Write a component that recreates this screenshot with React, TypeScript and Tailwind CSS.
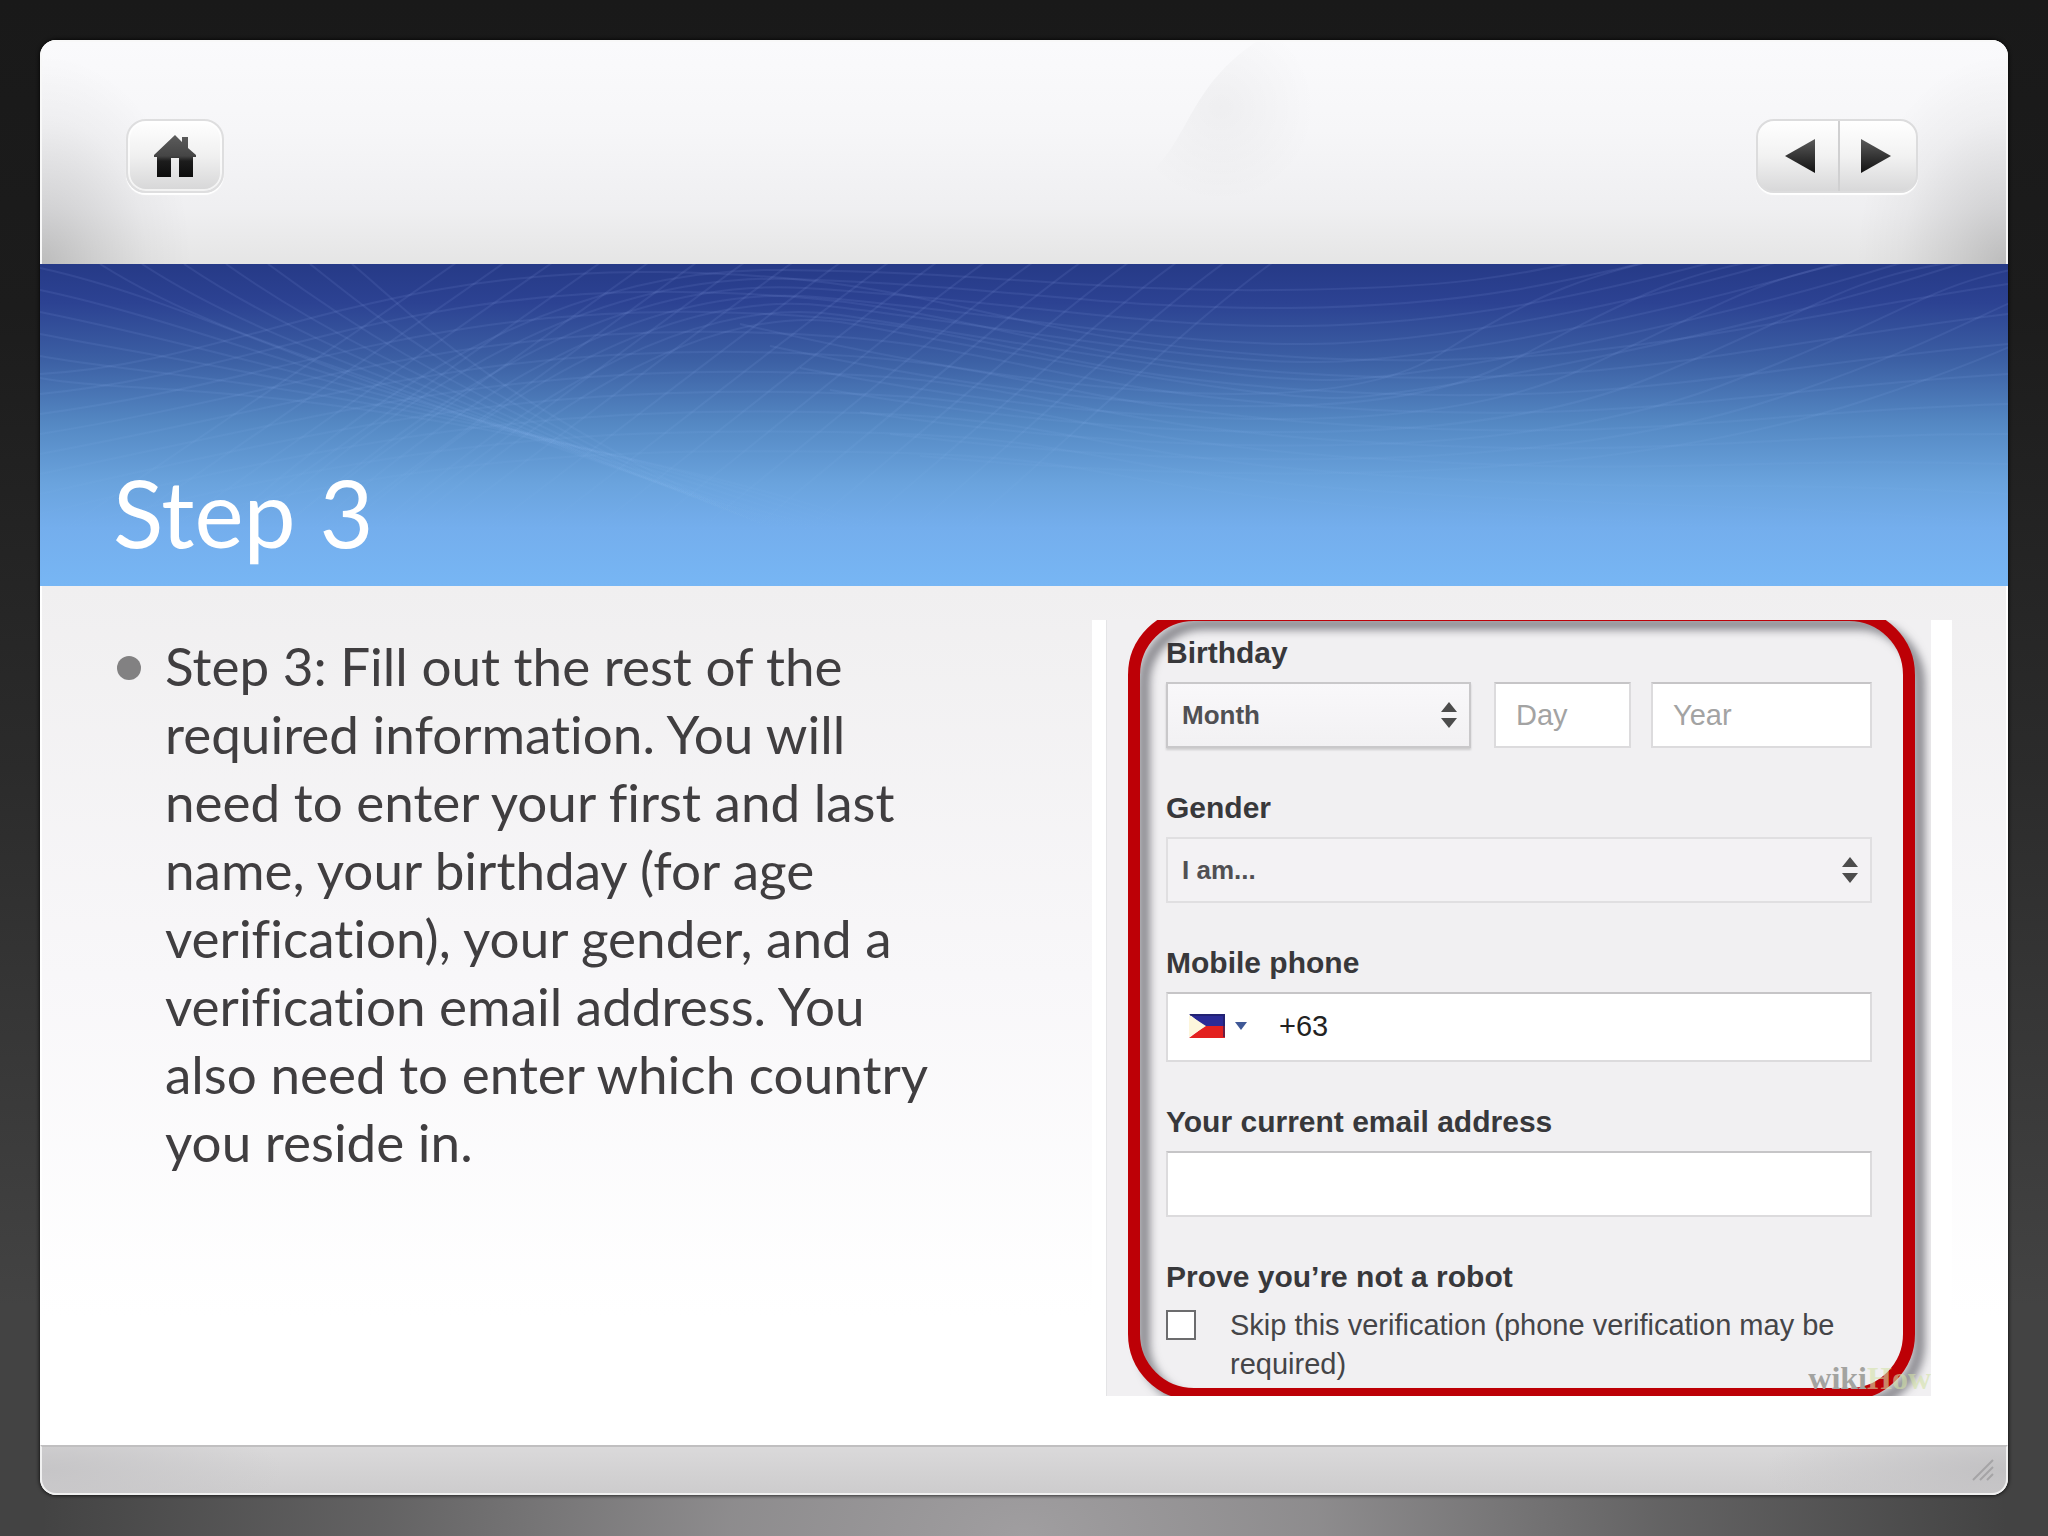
import React from "react";

const range = (n: number) => Array.from({ length: n }, (_, i) => i);

// Faint lattice of curves drawn over the blue title band.
function BannerLines() {
  const fan = range(7).map(
    (i) => `M${60 + i * 42} 0 C${170 + i * 34} ${70 - i * 3} ${300 + i * 22} ${100 + i * 3} ${540 + i * 20} ${190 + i * 7} S${900 + i * 10} 280 1100 300`
  );
  const left = range(6).map(
    (i) => `M0 ${i * 22 + 4} C${120 - i * 6} ${30 + i * 20} ${240 - i * 8} ${90 + i * 5} ${420 + i * 20} ${150 + i * 6} S${760 + i * 20} 280 960 300`
  );
  const hills = range(10).map(
    (i) =>
      `M0 ${110 + i * 20} C${190 + i * 20} ${100 + i * 10} ${330 + i * 24} ${4 + i * 20} ${620 + i * 22} ${8 + i * 20} S${940 + i * 12} ${72 + i * 17} ${1240 + i * 14} ${92 + i * 17} S1700 ${60 + i * 22} 1968 ${20 + i * 30}`
  );
  const troughs = range(7).map(
    (i) =>
      `M${120 + i * 30} 320 C${330 + i * 20} ${120 + i * 12} ${520 + i * 20} ${4 + i * 4} ${740 + i * 12} ${6 + i * 9} S${1040 + i * 30} ${28 + i * 18} ${1240 + i * 10} ${26 + i * 18} S${1480 + i * 40} ${10 + i * 10} ${1620 + i * 60} -20`
  );
  const right = range(7).map(
    (i) => `M${700 + i * 30} ${60 + i * 22} C${1000 + i * 20} ${130 + i * 14} ${1290 + i * 40} ${160 + i * 12} ${1400 + i * 70} ${90 + i * 8} S${1560 + i * 80} 10 ${1640 + i * 110} -10`
  );
  const diagonals = range(18).map(
    (i) => `M${-60 + i * 54} 322 C${120 + i * 52} 200 ${330 + i * 48} 60 ${420 + i * 48} -4`
  );
  return (
    <svg
      className="absolute inset-0 h-full w-full"
      viewBox="0 0 1968 322"
      preserveAspectRatio="none"
      fill="none"
      aria-hidden="true"
    >
      <defs>
        <linearGradient id="lineFade" gradientUnits="userSpaceOnUse" x1="0" y1="0" x2="0" y2="270">
          <stop offset="0" stopColor="#8fa0e6" stopOpacity="0.12" />
          <stop offset="0.5" stopColor="#8fb6f4" stopOpacity="0.1" />
          <stop offset="1" stopColor="#9fd0ff" stopOpacity="0" />
        </linearGradient>
      </defs>
      {[...fan, ...left, ...hills, ...troughs, ...right, ...diagonals].map((d) => (
        <path key={d} d={d} stroke="url(#lineFade)" strokeWidth="2" />
      ))}
    </svg>
  );
}

function HomeIcon() {
  return (
    <svg className="h-11 w-11" viewBox="0 0 44 44" aria-hidden="true">
      <defs>
        <linearGradient id="homeFill" x1="0" y1="0" x2="0" y2="1">
          <stop offset="0" stopColor="#5c5c5c" />
          <stop offset="0.5" stopColor="#454545" />
          <stop offset="0.62" stopColor="#1c1c1c" />
          <stop offset="1" stopColor="#0c0c0c" />
        </linearGradient>
      </defs>
      <path
        fill="url(#homeFill)"
        d="M22 1 L29 8 V3 H35 V14 L43 21 V23 H40 V43 H26 V24 H18 V43 H4 V23 H1 V21 Z"
      />
    </svg>
  );
}

function Triangle({ dir }: { dir: "left" | "right" }) {
  return (
    <svg className="h-9 w-8" viewBox="0 0 32 36" aria-hidden="true">
      <defs>
        <linearGradient id="triFill" x1="0" y1="0" x2="0" y2="1">
          <stop offset="0" stopColor="#5a5a5a" />
          <stop offset="1" stopColor="#111" />
        </linearGradient>
      </defs>
      <path fill="url(#triFill)" d={dir === "left" ? "M1 18 L31 1 V35 Z" : "M31 18 L1 1 V35 Z"} />
    </svg>
  );
}

function UpDown() {
  return (
    <svg className="pointer-events-none absolute right-3.5 top-1/2 h-7 w-4 -translate-y-1/2" viewBox="0 0 16 28" aria-hidden="true">
      <path fill="#4c4c4c" d="M8 1 L16 11 H0 Z M8 27 L16 17 H0 Z" />
    </svg>
  );
}

function Flag() {
  return (
    <svg className="h-6 w-9" viewBox="0 0 36 24" aria-hidden="true">
      <path fill="#2b2b96" d="M0 0 H36 V13 H16 Z" />
      <path fill="#e3211f" d="M0 24 H36 V12 H16 Z" />
      <path fill="#fdf6dc" d="M0 1 L17 12 L0 23 Z" />
      <path fill="none" stroke="#1c1c5c" strokeOpacity="0.6" strokeWidth="2" d="M1 1 H35 V23" />
    </svg>
  );
}

const label = "block text-[30px] leading-9 font-bold text-[#38383b]";
const field =
  "h-[66px] w-full min-w-0 border-2 border-[#dcdbdd] border-t-[#c6c5c7] bg-white px-5 text-[29px] text-[#333] outline-none placeholder:text-[#a3a3a3]";
const select =
  "h-[66px] w-full appearance-none border-2 px-3.5 text-[26px] font-bold text-[#505053] outline-none";

function SignupForm() {
  return (
    <div className="flex bg-white pl-3.5 pr-[21px] font-['Liberation_Sans',Arial,sans-serif]">
      <form className="relative flex-1 overflow-hidden border-l border-[#e4e4e6] bg-[#f1f0f2] pt-[15px] pr-[59px] pb-3 pl-[59px]">
        <div className="pointer-events-none absolute -top-[11px] right-4 -bottom-1 left-[21px] rounded-[66px] border-[12px] border-[#bd0006] drop-shadow-[10px_9px_4px_rgba(40,40,50,0.5)]" />
        <div className="flex flex-col gap-[42px]">
          <fieldset>
            <legend className={label}>Birthday</legend>
            <div className="mt-[11px] flex">
              <div className="relative mr-[23px] w-[305px] shrink-0">
                <select
                  aria-label="Month"
                  className={`${select} border-[#c9c8ca] bg-linear-to-b from-[#f9f8fa] to-[#f2f1f3] shadow-[0_2px_2px_rgba(0,0,0,0.15)]`}
                >
                  <option>Month</option>
                </select>
                <UpDown />
              </div>
              <div className="mr-5 w-[137px] shrink-0">
                <input aria-label="Day" placeholder="Day" className={field} />
              </div>
              <div className="flex-1">
                <input aria-label="Year" placeholder="Year" className={field} />
              </div>
            </div>
          </fieldset>
          <div>
            <label htmlFor="gender" className={label}>
              Gender
            </label>
            <div className="relative mt-[11px]">
              <select id="gender" className={`${select} border-[#e0dfe1] bg-[#f3f2f4]`}>
                <option>I am...</option>
              </select>
              <UpDown />
            </div>
          </div>
          <div>
            <label htmlFor="phone" className={label}>
              Mobile phone
            </label>
            <div className="mt-[11px] flex h-[70px] items-center border-2 border-[#dcdbdd] border-t-[#c6c5c7] bg-white pb-0.5 pl-[21px]">
              <button type="button" aria-label="Country code" className="flex items-center gap-2.5">
                <Flag />
                <svg className="h-2 w-3" viewBox="0 0 12 8" aria-hidden="true">
                  <path fill="#3f5896" d="M0 0 H12 L6 8 Z" />
                </svg>
              </button>
              <input
                id="phone"
                defaultValue="+63"
                className="ml-8 h-full min-w-0 flex-1 bg-transparent text-[29px] text-[#222] outline-none"
              />
            </div>
          </div>
          <div>
            <label htmlFor="email" className={label}>
              Your current email address
            </label>
            <input id="email" className={`${field} mt-[11px] block`} />
          </div>
          <fieldset>
            <legend className={label}>Prove you’re not a robot</legend>
            <div className="mt-[11px] flex items-start">
              <input
                id="skip"
                type="checkbox"
                className="mt-1 h-[30px] w-[30px] shrink-0 appearance-none border-2 border-[#6c6c6e] bg-white"
              />
              <label htmlFor="skip" className="ml-[34px] text-[29px] leading-[39px] text-[#454548]">
                Skip this verification (phone verification may be required)
              </label>
            </div>
          </fieldset>
        </div>
        <div className="absolute right-0 bottom-0.5 font-['Liberation_Serif',serif] text-[32px] leading-8 font-bold">
          <span className="text-[#a3a3a0]">wiki</span>
          <span className="text-[#d3e2a8]/60">How</span>
        </div>
      </form>
    </div>
  );
}

export default function App() {
  return (
    <div className="flex min-h-screen flex-col bg-[radial-gradient(ellipse_48%_40%_at_50%_100%,#a09ea0_0%,rgba(160,158,160,0.8)_30%,rgba(160,158,160,0.35)_65%,transparent_100%),linear-gradient(to_bottom,#191919_0%,#1c1c1c_20%,#2b2b2b_50%,#434343_85%,#434343_100%)] px-10 pt-10 pb-[41px] font-[Lato,sans-serif]">
      <main className="flex flex-1 flex-col overflow-hidden rounded-2xl bg-white shadow-[0_0_4px_#000]">
        <header className="relative flex h-56 items-center justify-between border-x-2 border-t-2 border-[#f8f8f8] bg-[radial-gradient(ellipse_150px_210px_at_0%_100%,rgba(0,0,0,0.18)_0%,rgba(0,0,0,0.1)_35%,rgba(0,0,0,0.03)_70%,transparent_100%),radial-gradient(ellipse_150px_210px_at_100%_100%,rgba(0,0,0,0.18)_0%,rgba(0,0,0,0.1)_35%,rgba(0,0,0,0.03)_70%,transparent_100%),linear-gradient(to_bottom,#fafafc,#f6f6f8_40%,#efeff1_75%,#e5e5e5)] pt-1.5 pr-[88px] pl-[84px]">
          <svg className="absolute top-0 right-0 h-40 w-[875px]" viewBox="0 0 875 160" preserveAspectRatio="none" aria-hidden="true">
            <defs>
              <radialGradient id="swoosh" gradientUnits="userSpaceOnUse" cx="90" cy="65" r="95">
                <stop offset="0" stopColor="#000" stopOpacity="0.035" />
                <stop offset="1" stopColor="#000" stopOpacity="0" />
              </radialGradient>
            </defs>
            <path fill="url(#swoosh)" d="M0 145 C60 110 50 50 125 0 H875 V160 H0 Z" />
          </svg>
          <button
            type="button"
            aria-label="Home"
            className="relative flex h-[74px] w-[98px] items-center justify-center rounded-[20px] border-2 border-[#dededf] bg-linear-to-b from-white via-[#f0f0f0] to-[#d6d6d7] shadow-[0_2px_1px_#fff,inset_0_0_0_2px_rgba(255,255,255,0.7)]"
          >
            <HomeIcon />
          </button>
          <nav className="relative flex h-[74px] w-[162px] overflow-hidden rounded-[18px] border-2 border-[#dcdcdd] bg-linear-to-b from-white via-[#f2f2f2] to-[#d8d8d9] shadow-[0_2px_1px_#fff]">
            <button type="button" aria-label="Previous" className="flex flex-1 items-center justify-center border-r-2 border-[#d0d0d1] pl-1">
              <Triangle dir="left" />
            </button>
            <button type="button" aria-label="Next" className="flex w-[76px] items-center justify-center pr-1">
              <Triangle dir="right" />
            </button>
          </nav>
        </header>
        <section className="relative flex h-[322px] items-end bg-[linear-gradient(to_bottom,#263a87_0%,#2c4292_12%,#3c60a4_30%,#5589c4_50%,#6aa3dd_68%,#74aeed_82%,#77b6f4_100%)] px-[73px] pb-[18px]">
          <BannerLines />
          <h1 className="relative text-[93px] leading-[112px] text-white">Step 3</h1>
        </section>
        <section className="flex flex-1 items-start justify-between border-x-2 border-white bg-linear-to-b from-[#f0eff0] via-[#f8f7f9] via-45% to-white to-85% pt-[34px] pr-[54px] pl-[75px]">
          <ul className="w-[830px] pt-3">
            <li className="flex">
              <span className="mt-6 mr-6 h-6 w-6 shrink-0 rounded-full bg-[#828182]" />
              <p className="text-[53px] leading-[68px] text-[#403e40] [font-variant-ligatures:none]">
                Step 3: Fill out the rest of the required information. You will need to enter your first and last name, your
                birthday (for age verification), your gender, and a verification email address. You also need to enter which
                country you reside in.
              </p>
            </li>
          </ul>
          <div className="w-[860px] shrink-0">
            <SignupForm />
          </div>
        </section>
        <footer className="flex h-[50px] items-center justify-end rounded-b-2xl border-2 border-[#f0f0f0] border-t-[#c0bfc0] bg-[radial-gradient(ellipse_240px_60px_at_0%_50%,#c6c5c7,transparent),radial-gradient(ellipse_240px_60px_at_100%_50%,#c2c1c3,transparent),linear-gradient(to_bottom,#dad9da,#cdcccd)] pr-2.5">
          <svg className="h-6 w-6" viewBox="0 0 24 24" fill="none" stroke="#a5a4a6" strokeWidth="2" aria-hidden="true">
            <path d="M1 22 L21 2 M8 22 L21 9 M15 22 L21 16" />
          </svg>
        </footer>
      </main>
    </div>
  );
}
